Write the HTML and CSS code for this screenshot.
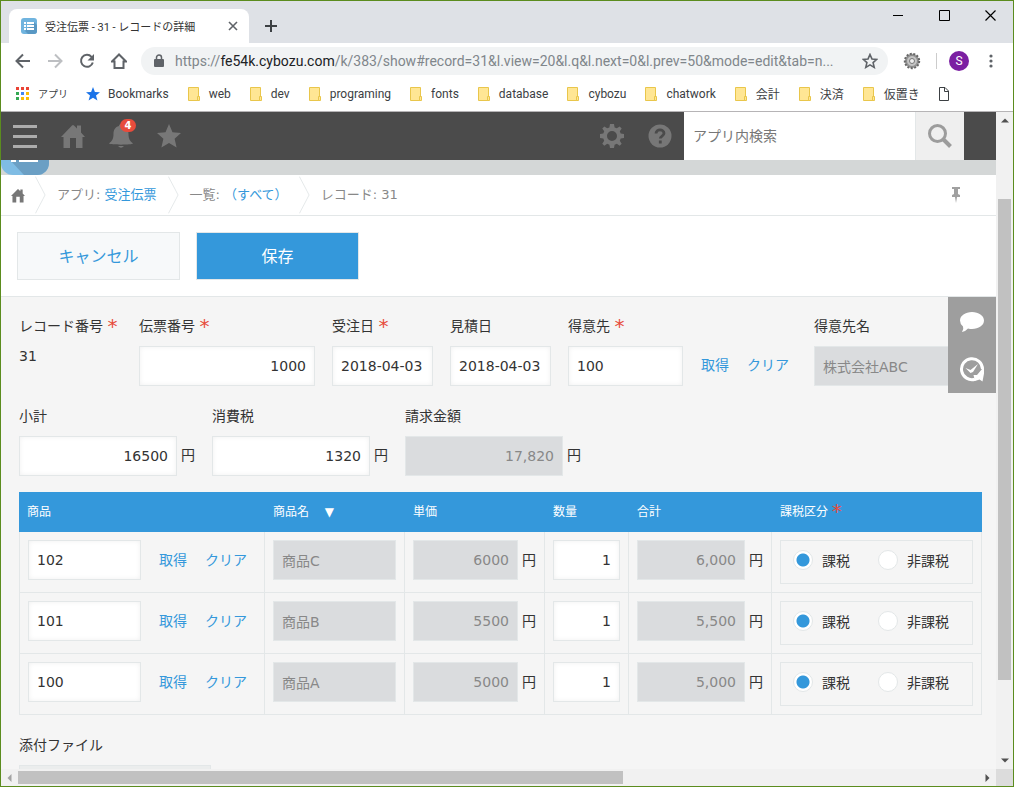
FILE: index.html
```html
<!DOCTYPE html>
<html lang="ja">
<head>
    <meta charset="UTF-8">
    <meta name="viewport" content="width=device-width, initial-scale=1.0">
    <title>受注伝票 - 31 - レコードの詳細</title>
    <link rel="stylesheet" href="styles.css">
</head>
<body>

    <!-- Shared icons -->
    <svg class="sprite" aria-hidden="true">
        <symbol id="folder" viewBox="0 0 14 16">
            <path d="M1.500 1.500h10v13h-10z" fill="#ffe694" stroke="#e9c64b"/>
            <path d="M10.500 10.500h2v4h-2z" fill="#ffe694" stroke="#e9c64b"/>
        </symbol>
        <symbol id="house" viewBox="0 0 24 24">
            <path d="M0 13 11 1.500Q12 .5 13 1.500L16 4.500V1.500h4v7L24 13h-2.500v11H15V14H9v10H2.500V13z"/>
        </symbol>
        <symbol id="chevron" viewBox="0 0 12 40">
            <path d="M.5 0 11 20 .5 40" fill="none" stroke="#e3e7e8"/>
        </symbol>
    </svg>

    <div class="window">
        <!-- Tab strip -->
        <header class="tab-strip">
            <div class="tab">
                <svg class="favicon" viewBox="0 0 16 16">
                    <rect width="16" height="16" rx="3" fill="#70b4df"/>
                    <path d="M4 13 13 4l3 3v6a3 3 0 0 1-3 3H7z" fill="#5998c4"/>
                    <path d="M3 4h2v2H3zm3 0h7v2H6zM3 7h2v2H3zm3 0h7v2H6zm-3 3h2v2H3zm3 0h7v2H6z" fill="#fff"/>
                </svg>
                <span class="tab-title">受注伝票 - 31 - レコードの詳細</span>
                <button class="tab-close" type="button" aria-label="閉じる">
                    <svg width="10" height="10" viewBox="0 0 10 10"><path d="m1 1 8 8m0-8L1 9" fill="none" stroke="#5f6368" stroke-width="1.600"/></svg>
                </button>
            </div>
            <button class="new-tab" type="button" aria-label="新しいタブ">
                <svg width="12" height="12" viewBox="0 0 12 12"><path d="M6 0v12M0 6h12" stroke="#3c4043" stroke-width="2"/></svg>
            </button>
            <div class="window-buttons">
                <button type="button" aria-label="最小化"><svg width="11" height="11" viewBox="0 0 11 11"><path d="M0 5.500h10" stroke="#000"/></svg></button>
                <button type="button" aria-label="最大化"><svg width="11" height="11" viewBox="0 0 11 11"><path d="M.5.5h10v10H.5z" fill="none" stroke="#000"/></svg></button>
                <button type="button" aria-label="ウィンドウを閉じる"><svg width="11" height="11" viewBox="0 0 11 11"><path d="m.5.5 10 10m0-10-10 10" stroke="#000" stroke-width="1.200"/></svg></button>
            </div>
        </header>

        <!-- Address bar -->
        <nav class="toolbar">
            <button type="button" aria-label="戻る">
                <svg width="16" height="16" viewBox="0 0 16 16"><path d="M15 8H2m6-6.500L1.500 8 8 14.500" fill="none" stroke="#5f6368" stroke-width="2"/></svg>
            </button>
            <button type="button" aria-label="進む">
                <svg width="16" height="16" viewBox="0 0 16 16"><path d="M1 8h13M8 1.500 14.500 8 8 14.500" fill="none" stroke="#bdbfc2" stroke-width="2"/></svg>
            </button>
            <button type="button" aria-label="再読み込み">
                <svg width="16" height="16" viewBox="0 0 16 16"><path d="M13.800 9.500A6 6 0 1 1 12.500 3.800L14 5.300" fill="none" stroke="#5f6368" stroke-width="2"/><path d="M15 1v6.500H8.500z" fill="#5f6368"/></svg>
            </button>
            <button type="button" aria-label="ホーム">
                <svg width="16" height="16" viewBox="0 0 16 16"><path d="M8 1.500 1 8.500h2.500V15h9V8.500H15z" fill="none" stroke="#5f6368" stroke-width="2"/></svg>
            </button>
            <div class="address">
                <svg width="10" height="14" viewBox="0 0 10 14"><path d="M1 5h8a1 1 0 0 1 1 1v6a1 1 0 0 1-1 1H1a1 1 0 0 1-1-1V6a1 1 0 0 1 1-1z" fill="#5f6368"/><path d="M2.500 6V3.500a2.500 2.500 0 0 1 5 0V6" fill="none" stroke="#5f6368" stroke-width="1.500"/></svg>
                <span class="url">https://<b>fe54k.cybozu.com</b>/k/383/show#record=31&amp;l.view=20&amp;l.q&amp;l.next=0&amp;l.prev=50&amp;mode=edit&amp;tab=n...</span>
                <button class="bookmark-star" type="button" aria-label="ブックマークに追加">
                    <svg width="16" height="16" viewBox="0 0 14 14"><path d="m7 1.300 1.700 3.900 4.200.4-3.200 2.800 1 4.200L7 10.400l-3.700 2.200 1-4.200L1.100 5.600l4.200-.4z" fill="none" stroke="#5f6368" stroke-width="1.400"/></svg>
                </button>
            </div>
            <button class="extension" type="button" aria-label="拡張機能">
                <svg width="18" height="18" viewBox="0 0 18 18">
                    <circle cx="9" cy="9" r="7.200" fill="#999" stroke="#666" stroke-width="2" stroke-dasharray="2 1.500"/>
                    <circle cx="9" cy="9" r="5.500" fill="#c4c4c4" stroke="#888"/>
                    <circle cx="9" cy="9" r="2.500" fill="#eee" stroke="#777"/>
                </svg>
            </button>
            <span class="divider"></span>
            <button class="profile" type="button" aria-label="プロフィール"><span class="avatar">S</span></button>
            <button class="menu" type="button" aria-label="メニュー">
                <svg width="4" height="14" viewBox="0 0 4 14"><g fill="#5f6368"><circle cx="2" cy="2" r="1.600"/><circle cx="2" cy="7" r="1.600"/><circle cx="2" cy="12" r="1.600"/></g></svg>
            </button>
        </nav>

        <!-- Bookmarks -->
        <nav class="bookmarks">
            <a class="apps" href="#">
                <svg viewBox="0 0 14 14"><path d="M0 0h3v3H0zm5 0h3v3H5zm5 0h3v3h-3z" fill="#ea4335"/><path d="M0 5h3v3H0zm0 5h3v3H0z" fill="#34a853"/><path d="M5 5h3v3H5z" fill="#4285f4"/><path d="M10 5h3v3h-3zm-5 5h3v3H5zm5 0h3v3h-3z" fill="#fbbc05"/></svg>
                アプリ
            </a>
            <a href="#">
                <svg viewBox="0 0 14 14"><path d="m7 0 1.900 4.900 5.100.3-4 3.200 1.400 5L7 10.700l-4.400 2.700 1.400-5-4-3.200 5.100-.3z" fill="#1a73e8"/></svg>
                Bookmarks
            </a>
            <a href="#"><svg><use href="#folder"/></svg>web</a>
            <a href="#"><svg><use href="#folder"/></svg>dev</a>
            <a href="#"><svg><use href="#folder"/></svg>programing</a>
            <a href="#"><svg><use href="#folder"/></svg>fonts</a>
            <a href="#"><svg><use href="#folder"/></svg>database</a>
            <a href="#"><svg><use href="#folder"/></svg>cybozu</a>
            <a href="#"><svg><use href="#folder"/></svg>chatwork</a>
            <a href="#"><svg><use href="#folder"/></svg>会計</a>
            <a href="#"><svg><use href="#folder"/></svg>決済</a>
            <a href="#"><svg><use href="#folder"/></svg>仮置き</a>
            <a href="#" aria-label="ページ"><svg viewBox="0 0 14 16"><path d="M1.500 1.500H7l3.500 3.500v9.500h-9zM6.500 1.500v4h4" fill="#fff" stroke="#3c4043"/></svg></a>
        </nav>

        <div class="viewport">
            <main class="page">
                <!-- kintone header -->
                <div class="topbar">
                    <button type="button" aria-label="メニュー"><svg width="24" height="24" viewBox="0 0 24 24" fill="#acacac"><path d="M0 1h24v3H0zm0 10h24v3H0zm0 10h24v3H0z"/></svg></button>
                    <button type="button" aria-label="ポータル"><svg width="24" height="24"><use href="#house"/></svg></button>
                    <button class="bell" type="button" aria-label="通知">
                        <svg width="24" height="24" viewBox="0 0 24 24"><path d="M12 0c1.500 0 2 1 2 2 4 1 5.500 4 5.500 8 0 5 1.500 7 4.500 9.500-1 1.500-23 1.500-24 0C3 17 4.500 15 4.500 10c0-4 1.500-7 5.500-8 0-1 .5-2 2-2z"/><path d="M9 22h6q-3 3.500-6 0z"/></svg>
                        <span class="badge">4</span>
                    </button>
                    <button type="button" aria-label="お気に入り"><svg width="24" height="24" viewBox="0 0 24 24"><path d="m12 0 3.500 8.300 8.500.7-6.400 5.800 2 8.700L12 19l-7.600 4.500 2-8.700L0 9l8.500-.7z"/></svg></button>
                    <button class="gear" type="button" aria-label="設定"><svg width="24" height="24" viewBox="0 0 24 24"><path fill-rule="evenodd" d="M10 0h4l.6 3.400 2.200.9L19.700 2.400l2 2-1.900 2.900.9 2.200L24 10v4l-3.300.6-.9 2.200 1.900 2.900-2 2-2.900-1.900-2.200.9L14 24h-4l-.6-3.300-2.200-.9-2.900 1.900-2-2 1.900-2.900-.9-2.200L0 14v-4l3.300-.5.9-2.200-1.900-2.900 2-2 2.900 1.900 2.200-.9zM12 7a5 5 0 1 0 0 10 5 5 0 0 0 0-10z"/></svg></button>
                    <button type="button" aria-label="ヘルプ"><svg width="24" height="24" viewBox="0 0 24 24"><circle cx="12" cy="12" r="11.500"/><path d="M8 9.500C8 4.700 16 4.900 16 9.300c0 2.800-3.700 2.700-3.700 5.200M12.300 16.500v3" fill="none" stroke="#4b4b4b" stroke-width="2.800"/></svg></button>
                    <form class="search">
                        <input type="text" placeholder="アプリ内検索" aria-label="アプリ内検索">
                        <button type="button" aria-label="検索"><svg width="24" height="24" viewBox="0 0 24 24"><circle cx="9.500" cy="9.500" r="8" fill="none" stroke="#9c9c9c" stroke-width="3"/><path d="m15.500 15.500 7 7" stroke="#9c9c9c" stroke-width="4"/></svg></button>
                    </form>
                </div>

                <div class="app-strip">
                    <svg width="48" height="15" viewBox="0 0 48 15"><path d="M0 0h48v3a12 12 0 0 1-12 12H12A12 12 0 0 1 0 3z" fill="#7fbce4"/><path d="M9 0h39v3a12 12 0 0 1-12 12H23z" fill="#6b9fc4"/><path d="M10 0h5v2h-5zm8 0h19v2H18z" fill="#fff"/></svg>
                </div>

                <nav class="breadcrumb">
                    <a class="crumb-home" href="#" aria-label="ホーム"><svg width="14" height="15"><use href="#house"/></svg></a>
                    <svg class="chevron"><use href="#chevron"/></svg>
                    <span>アプリ: <a href="#">受注伝票</a></span>
                    <svg class="chevron"><use href="#chevron"/></svg>
                    <span>一覧: <a href="#">（すべて）</a></span>
                    <svg class="chevron"><use href="#chevron"/></svg>
                    <span>レコード: 31</span>
                    <button class="pin" type="button" aria-label="固定"><svg width="10" height="16" viewBox="0 0 10 16"><path d="M1 0h8v2H7v5l2 1v2H6l-1 6-1-6H1V8l2-1V2H1z" fill="#a0a0a0"/></svg></button>
                </nav>

                <div class="actions">
                    <button class="btn" type="button">キャンセル</button>
                    <button class="btn btn-primary" type="button">保存</button>
                </div>

                <section class="record">
                    <div class="form-row">
                        <div class="field record-number">
                            <span class="label">レコード番号 <i>*</i></span>
                            <span>31</span>
                        </div>
                        <div class="field slip-number">
                            <label for="slip">伝票番号 <i>*</i></label>
                            <input class="num" id="slip" type="text" value="1000">
                        </div>
                        <div class="field date">
                            <label for="ordered">受注日 <i>*</i></label>
                            <input id="ordered" type="text" value="2018-04-03">
                        </div>
                        <div class="field date">
                            <label for="quoted">見積日</label>
                            <input id="quoted" type="text" value="2018-04-03">
                        </div>
                        <div class="field customer">
                            <label for="customer">得意先 <i>*</i></label>
                            <div class="lookup">
                                <input id="customer" type="text" value="100">
                                <a href="#">取得</a>
                                <a href="#">クリア</a>
                            </div>
                        </div>
                        <div class="field customer-name">
                            <label for="customer-name">得意先名</label>
                            <input id="customer-name" type="text" value="株式会社ABC" disabled>
                        </div>
                    </div>

                    <div class="form-row">
                        <div class="field amount">
                            <label for="subtotal">小計</label>
                            <div class="with-unit"><input class="num" id="subtotal" type="text" value="16500"><span>円</span></div>
                        </div>
                        <div class="field amount">
                            <label for="tax">消費税</label>
                            <div class="with-unit"><input class="num" id="tax" type="text" value="1320"><span>円</span></div>
                        </div>
                        <div class="field amount">
                            <label for="total">請求金額</label>
                            <div class="with-unit"><input class="num" id="total" type="text" value="17,820" disabled><span>円</span></div>
                        </div>
                    </div>

                    <table class="items">
                        <thead>
                            <tr>
                                <th class="col-item">商品</th>
                                <th class="col-name">商品名 <span class="sort">▼</span></th>
                                <th class="col-price">単価</th>
                                <th class="col-qty">数量</th>
                                <th class="col-total">合計</th>
                                <th class="col-tax">課税区分 <i>*</i></th>
                            </tr>
                        </thead>
                        <tbody>
                            <tr>
                                <td><div class="lookup"><input type="text" value="102" aria-label="商品"><a href="#">取得</a><a href="#">クリア</a></div></td>
                                <td><input type="text" value="商品C" aria-label="商品名" disabled></td>
                                <td><div class="with-unit"><input class="num" type="text" value="6000" aria-label="単価" disabled><span>円</span></div></td>
                                <td><input class="num" type="text" value="1" aria-label="数量"></td>
                                <td><div class="with-unit"><input class="num" type="text" value="6,000" aria-label="合計" disabled><span>円</span></div></td>
                                <td>
                                    <div class="radios">
                                        <label><input type="radio" name="tax1" checked>課税</label>
                                        <label><input type="radio" name="tax1">非課税</label>
                                    </div>
                                </td>
                            </tr>
                            <tr>
                                <td><div class="lookup"><input type="text" value="101" aria-label="商品"><a href="#">取得</a><a href="#">クリア</a></div></td>
                                <td><input type="text" value="商品B" aria-label="商品名" disabled></td>
                                <td><div class="with-unit"><input class="num" type="text" value="5500" aria-label="単価" disabled><span>円</span></div></td>
                                <td><input class="num" type="text" value="1" aria-label="数量"></td>
                                <td><div class="with-unit"><input class="num" type="text" value="5,500" aria-label="合計" disabled><span>円</span></div></td>
                                <td>
                                    <div class="radios">
                                        <label><input type="radio" name="tax2" checked>課税</label>
                                        <label><input type="radio" name="tax2">非課税</label>
                                    </div>
                                </td>
                            </tr>
                            <tr>
                                <td><div class="lookup"><input type="text" value="100" aria-label="商品"><a href="#">取得</a><a href="#">クリア</a></div></td>
                                <td><input type="text" value="商品A" aria-label="商品名" disabled></td>
                                <td><div class="with-unit"><input class="num" type="text" value="5000" aria-label="単価" disabled><span>円</span></div></td>
                                <td><input class="num" type="text" value="1" aria-label="数量"></td>
                                <td><div class="with-unit"><input class="num" type="text" value="5,000" aria-label="合計" disabled><span>円</span></div></td>
                                <td>
                                    <div class="radios">
                                        <label><input type="radio" name="tax3" checked>課税</label>
                                        <label><input type="radio" name="tax3">非課税</label>
                                    </div>
                                </td>
                            </tr>
                        </tbody>
                    </table>

                    <div class="field">
                        <span class="label">添付ファイル</span>
                        <div class="attachment"></div>
                    </div>

                    <!-- Comment / history switch -->
                    <aside class="side-tabs">
                        <button type="button" aria-label="コメント"><svg width="24" height="22" viewBox="0 0 24 22"><path d="M12 2c6.600 0 12 3.600 12 8.500S18.600 19 12 19q-2 0-4-.5Q6 21 2 22q2-3 1-5.500Q0 14 0 10.500C0 5.600 5.400 2 12 2z" fill="#fff"/></svg></button>
                        <button type="button" aria-label="変更履歴"><svg width="26" height="26" viewBox="0 0 26 26"><path d="M16 23.200A10.500 10.500 0 1 1 23.500 13" fill="none" stroke="#fff" stroke-width="3"/><path d="M14.500 19h3.500l5-6h2v4.500l-1.500 8-3-2-4.500 1.500z" fill="#fff"/><path d="m6.500 12 5 2L19 8l-5 8-2.500 1z" fill="#fff"/></svg></button>
                    </aside>
                </section>
            </main>

            <div class="scroll-y">
                <svg width="8" height="5" viewBox="0 0 8 5"><path d="M0 4.500 4 .5l4 4z" fill="#505050"/></svg>
                <div class="track-y"><div class="thumb-y"></div></div>
                <svg width="8" height="5" viewBox="0 0 8 5"><path d="M0 .5h8l-4 4z" fill="#505050"/></svg>
            </div>
            <div class="scroll-x">
                <svg width="5" height="8" viewBox="0 0 5 8"><path d="M4.500 0v8l-4-4z" fill="#a3a3a3"/></svg>
                <div class="track-x"><div class="thumb-x"></div></div>
                <svg width="5" height="8" viewBox="0 0 5 8"><path d="M.5 0v8l4-4z" fill="#505050"/></svg>
            </div>
            <div class="scroll-corner"></div>
        </div>
    </div>

</body>
</html>
```

FILE: styles.css
```css
:root {
    --frame: #5b8c1e;
    --blue: #3498db;
    --line: #e3e7e8;
    --text: #333;
    --font-ui: Roboto, "Noto Sans CJK JP", sans-serif;
    --font-page: "DejaVu Sans", "Noto Sans CJK JP", sans-serif;
}

* {
    box-sizing: border-box;
}

body {
    margin: 0;
    font-family: var(--font-ui);
    color: var(--text);
}

button {
    display: flex;
    align-items: center;
    justify-content: center;
    padding: 0;
    border: 0;
    background: none;
    font: inherit;
    cursor: pointer;
}

a {
    color: var(--blue);
    text-decoration: none;
}

svg {
    display: block;
    flex: none;
}

.sprite {
    display: none;
}

.window {
    display: flex;
    flex-direction: column;
    height: 100vh;
    border: 1px solid var(--frame);
    background: #fff;
}

/* --- Tab strip --- */
.tab-strip {
    display: flex;
    flex: none;
    height: 42px;
    padding-left: 8px;
    background: #dee1e6;
}

.tab {
    display: flex;
    align-items: center;
    width: 240px;
    margin-top: 8px;
    padding: 0 10px 0 12px;
    border-radius: 8px 8px 0 0;
    background: #fff;
}

.favicon {
    width: 16px;
    height: 16px;
}

.tab-title {
    flex: 1;
    margin-left: 8px;
    font-size: 11px;
    white-space: nowrap;
}

.tab-close {
    width: 12px;
    height: 16px;
}

.new-tab {
    width: 44px;
    margin-top: 8px;
}

.window-buttons {
    display: flex;
    margin-left: auto;
}

.window-buttons button {
    width: 46px;
    height: 29px;
}

/* --- Address bar --- */
.toolbar {
    display: flex;
    flex: none;
    align-items: center;
    height: 36px;
    padding: 0 12px 0 6px;
}

.toolbar > button {
    width: 32px;
    height: 28px;
}

.address {
    display: flex;
    flex: 1;
    align-items: center;
    min-width: 0;
    height: 28px;
    margin-left: 6px;
    padding: 0 10px 0 13px;
    border-radius: 14px;
    background: #f1f3f4;
}

.url {
    flex: 1;
    margin-left: 11px;
    overflow: hidden;
    font-size: 14px;
    color: #80868b;
    white-space: nowrap;
}

.url b {
    font-weight: normal;
    color: #202124;
}

.toolbar .extension {
    width: 48px;
}

.divider {
    width: 1px;
    height: 16px;
    background: #ccc;
}

.toolbar .profile {
    width: 44px;
}

.avatar {
    width: 20px;
    border-radius: 50%;
    background: #7b1fa2;
    font-size: 12px;
    line-height: 20px;
    color: #fff;
}

.toolbar .menu {
    width: 20px;
}

/* --- Bookmarks --- */
.bookmarks {
    display: flex;
    flex: none;
    align-items: center;
    gap: 18px;
    height: 33px;
    padding: 0 15px 3px;
    border-bottom: 1px solid #b6b4b6;
    font-size: 12px;
}

.bookmarks a {
    display: flex;
    align-items: center;
    gap: 8px;
    color: #3c4043;
    white-space: nowrap;
}

.bookmarks .apps {
    font-size: 10px;
}

.bookmarks svg {
    width: 14px;
    height: 16px;
}

/* --- Page and scrollbars --- */
.viewport {
    display: grid;
    flex: 1;
    grid-template-columns: minmax(0, 1fr) 17px;
    grid-template-rows: minmax(0, 1fr) 17px;
    min-height: 0;
}

.page {
    overflow: hidden;
    font-family: var(--font-page);
    font-size: 14px;
}

.scroll-y,
.scroll-x {
    display: flex;
    align-items: center;
    background: #f1f1f1;
}

.scroll-y {
    flex-direction: column;
    padding: 6px 0;
}

.scroll-x {
    padding: 0 6px;
}

.track-y {
    flex: 1;
    width: 13px;
    padding-top: 76px;
}

.thumb-y {
    height: 86%;
    background: #c1c1c1;
}

.track-x {
    flex: 1;
    height: 13px;
    padding: 0 6px;
}

.thumb-x {
    width: 63%;
    height: 100%;
    background: #c1c1c1;
}

.scroll-corner {
    background: #dcdcdc;
}

/* --- Header --- */
.topbar {
    display: flex;
    height: 48px;
    padding-right: 32px;
    background: #4b4b4b;
}

.topbar button {
    width: 48px;
    fill: #777;
}

.bell {
    position: relative;
}

.badge {
    position: absolute;
    top: 7px;
    left: 23px;
    width: 16px;
    border-radius: 7px;
    background: #e74c3c;
    font-size: 10px;
    font-weight: bold;
    line-height: 13px;
    color: #fff;
}

.gear {
    margin-left: auto;
}

.search {
    display: flex;
    width: 280px;
    background: #efefef;
}

.search input {
    flex: 1;
    min-width: 0;
    padding: 0 9px;
    border: 0;
    border-right: 1px solid var(--line);
    background: #fff;
    font: inherit;
}

.search input::placeholder {
    color: #777;
}

.app-strip {
    height: 15px;
    background: #d4d7d7;
}

.breadcrumb {
    display: flex;
    align-items: center;
    height: 41px;
    border-bottom: 1px solid var(--line);
    font-size: 13px;
    color: #888;
}

.breadcrumb span {
    padding: 0 11px 3px;
}

.crumb-home {
    padding: 0 10px;
    fill: #777;
}

.chevron {
    width: 11px;
    height: 40px;
}

.pin {
    width: 16px;
    margin: 0 32px 0 auto;
}

.actions {
    display: flex;
    gap: 16px;
    padding: 16px;
    border-bottom: 1px solid var(--line);
}

.btn {
    width: 163px;
    height: 48px;
    padding-bottom: 2px;
    border: 1px solid var(--line);
    background: #f7f9fa;
    font-size: 16px;
    color: var(--blue);
}

.btn-primary {
    background: var(--blue);
    color: #fff;
}

/* --- Record form --- */
.record {
    position: relative;
    display: flex;
    flex-direction: column;
    gap: 20px;
    min-height: 600px;
    padding: 19px 14px 20px 18px;
    background: #f5f5f5;
}

.record input[type="text"] {
    width: 100%;
    min-width: 0;
    height: 40px;
    padding: 0 8px;
    border: 1px solid var(--line);
    background: #fff;
    box-shadow: inset 0 0 5px #f0f0f0;
    font: inherit;
    color: var(--text);
}

.record input[type="text"]:disabled {
    background: #dadcde;
    box-shadow: none;
    color: #888;
}

.record .num {
    text-align: right;
}

/* required mark */
.record i {
    font-size: 20px;
    font-style: normal;
    line-height: 0;
    vertical-align: -2px;
    color: #e74c3c;
}

.form-row {
    display: flex;
    gap: 17px;
}

.field {
    display: flex;
    flex: none;
    flex-direction: column;
    gap: 10px;
    line-height: 20px;
}

.record-number {
    width: 103px;
}

.slip-number {
    width: 176px;
}

.date {
    width: 101px;
}

.customer {
    width: 229px;
}

.customer-name {
    width: 194px;
}

.amount {
    width: 176px;
}

.lookup {
    display: flex;
    align-items: center;
    gap: 18px;
}

.record .lookup input {
    width: 115px;
}

.lookup a {
    padding-bottom: 2px;
    white-space: nowrap;
}

.with-unit {
    display: flex;
    align-items: center;
    gap: 4px;
}

.with-unit input {
    flex: 1;
}

.with-unit span {
    padding-bottom: 2px;
}

/* --- Item table --- */
.items {
    width: 963px;
    margin-top: -4px;
    border-spacing: 0;
    table-layout: fixed;
}

.items th {
    height: 40px;
    padding: 0 8px 3px;
    background: var(--blue);
    font-size: 12px;
    font-weight: normal;
    text-align: left;
    color: #fff;
}

.items td {
    height: 61px;
    padding: 8px;
    border-right: 1px solid var(--line);
    border-bottom: 1px solid var(--line);
    vertical-align: top;
}

.items td:first-child {
    border-left: 1px solid var(--line);
}

.col-item {
    width: 246px;
}

.col-name,
.col-price {
    width: 140px;
}

.col-qty {
    width: 84px;
}

.col-total {
    width: 143px;
}

.sort {
    margin-left: 12px;
}

.record .items .lookup input {
    width: 113px;
}

.radios {
    display: flex;
    gap: 28px;
    height: 44px;
    padding: 0 12px 4px;
    border: 1px solid var(--line);
}

.radios label {
    display: flex;
    align-items: center;
    gap: 9px;
    white-space: nowrap;
}

.radios input {
    width: 20px;
    height: 20px;
    margin: 0;
    border: 1px solid var(--line);
    border-radius: 50%;
    background: #fff;
    appearance: none;
}

.radios input:checked {
    background: radial-gradient(circle, var(--blue) 6px, #fff 7px);
}

.attachment {
    width: 192px;
    height: 48px;
    border: 1px solid var(--line);
    background: #ebeded;
}

.side-tabs {
    position: absolute;
    top: 0;
    right: 0;
    background: #9e9e9e;
}

.side-tabs button {
    width: 48px;
    height: 48px;
}
```
